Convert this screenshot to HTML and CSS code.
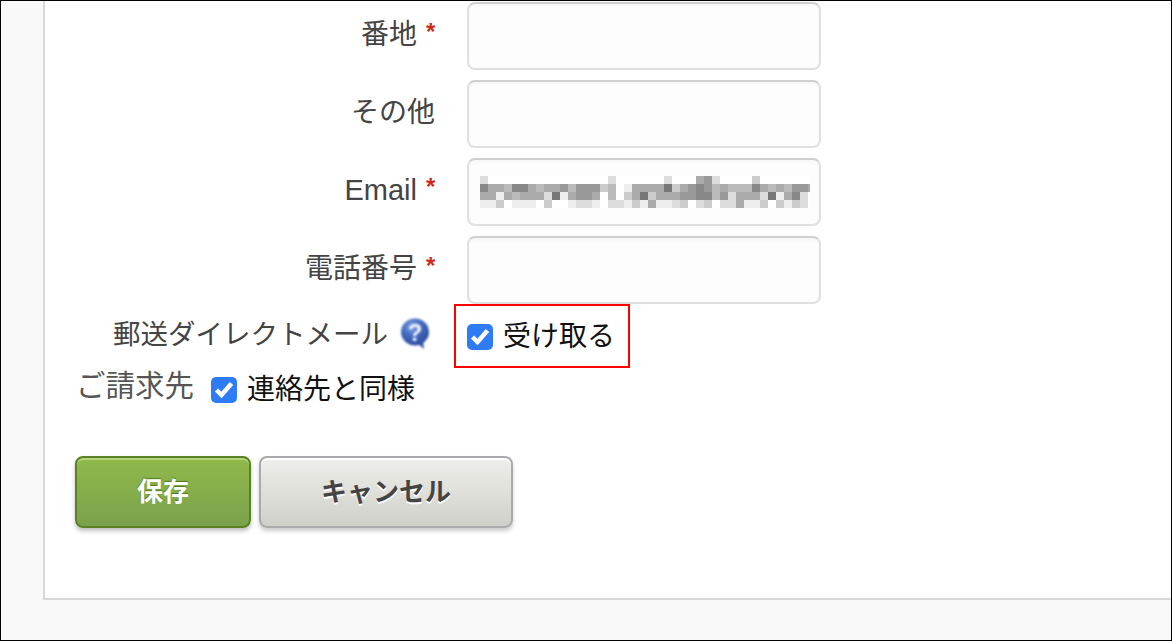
FILE: index.html
```html
<!DOCTYPE html>
<html lang="ja">
<head>
	<title>お客様情報</title>
	<meta charset="UTF-8">
	<link rel="stylesheet" href="styles.css">
</head>
<body>

<div class="card">

	<div class="fields">
		<div class="field">
			<label class="label">番地<span class="req">*</span></label>
			<input type="text" class="text-input">
		</div>
		<div class="field">
			<label class="label">その他<span class="req-space"></span></label>
			<input type="text" class="text-input">
		</div>
		<div class="field">
			<label class="label label-latin">Email<span class="req">*</span></label>
			<div class="blur-wrap">
				<input type="text" class="text-input">
				<div class="blur" id="blur"></div>
			</div>
		</div>
		<div class="field">
			<label class="label">電話番号<span class="req">*</span></label>
			<input type="text" class="text-input">
		</div>
	</div>

	<div class="mail-row">
		<label class="label label-mail">郵送ダイレクトメール
			<svg class="help" viewBox="0 0 30 32" width="30" height="32">
				<defs>
					<radialGradient id="bubble" cx="0.4" cy="0.3" r="0.75">
						<stop offset="0" stop-color="#7fa3e6"/>
						<stop offset="0.5" stop-color="#3f67bc"/>
						<stop offset="1" stop-color="#2a4a9c"/>
					</radialGradient>
				</defs>
				<ellipse cx="15" cy="14" rx="14" ry="13.5" fill="url(#bubble)"/>
				<path d="M17 25 L24 31 L23 23 Z" fill="#2f55aa"/>
				<text x="15" y="23" class="help-mark">?</text>
			</svg>
		</label>
		<div class="highlight">
			<span class="check">
				<svg viewBox="0 0 26 26" width="26" height="26"><path d="M5.5 13 L10.5 18 L20.5 6.5" fill="none" stroke="#fff" stroke-width="4.5"/></svg>
			</span>
			<span class="check-text">受け取る</span>
		</div>
	</div>

	<div class="billing-row">
		<span class="billing-label">ご請求先</span>
		<span class="check">
			<svg viewBox="0 0 26 26" width="26" height="26"><path d="M5.5 13 L10.5 18 L20.5 6.5" fill="none" stroke="#fff" stroke-width="4.5"/></svg>
		</span>
		<span class="check-text">連絡先と同様</span>
	</div>

	<div class="buttons">
		<button type="button" class="button save">保存</button>
		<button type="button" class="button cancel">キャンセル</button>
	</div>

</div>

<script src="blur.js"></script>
</body>
</html>
```

FILE: styles.css
```css
html, body {
	margin: 0;
	padding: 0;
}

body {
	box-sizing: border-box;
	width: 1172px;
	height: 641px;
	overflow: hidden;
	border: 1px solid #000;
	background-color: #f9f9f9;
	font-family: "Liberation Sans", "Noto Sans CJK JP", sans-serif;
}

.card {
	box-sizing: border-box;
	height: 599px;
	margin-left: 42px;
	padding-top: 1px;
	border-left: 2px solid #d8d8d8;
	border-bottom: 2px solid #d8d8d8;
	background-color: #fff;
}

.fields {
	display: grid;
	gap: 10px;
}

.field {
	display: flex;
	align-items: center;
	gap: 31px;
}

.label {
	display: flex;
	align-items: center;
	justify-content: flex-end;
	box-sizing: border-box;
	flex: none;
	width: 391px;
	height: 44px;
	margin-top: -2px;
	color: #444;
	font-size: 28px;
	line-height: 44px;
	white-space: nowrap;
}

.label-latin {
	margin-top: -4px;
	font-size: 29px;
}

.req {
	width: 10px;
	margin-left: 9px;
	margin-top: -6px;
	color: #cf2a1c;
	font-size: 24px;
	font-weight: bold;
}

.req-space {
	width: 1px;
}

.text-input {
	display: block;
	box-sizing: border-box;
	width: 354px;
	height: 68px;
	border: 2px solid #e0e0e0;
	border-top-color: #cfcfcf;
	border-radius: 8px;
	background-color: #fdfdfd;
	box-shadow: inset 0 2px 3px rgba(0, 0, 0, 0.03);
	outline: none;
}

.blur-wrap {
	position: relative;
}

.blur {
	position: absolute;
	left: 13px;
	top: 18px;
	width: 330px;
	height: 32px;
	overflow: hidden;
}

.blur-row {
	display: flex;
	height: 8px;
}

.blur-cell {
	flex: none;
	width: 8px;
	height: 8px;
}

.mail-row {
	display: flex;
	align-items: center;
}

.label-mail {
	margin-top: -3px;
	padding-right: 6px;
	font-size: 27.5px;
}

.help {
	flex: none;
	margin-left: 12px;
	margin-top: -1px;
	filter: blur(0.8px);
}

.help-mark {
	fill: #f4f6fb;
	font-size: 24px;
	font-weight: bold;
	font-family: "Liberation Sans", sans-serif;
	text-anchor: middle;
}

.highlight {
	display: flex;
	align-items: center;
	box-sizing: border-box;
	width: 176px;
	height: 64px;
	margin-left: 18px;
	padding: 1px 0 0 11px;
	border: 2px solid #f00;
}

.check {
	display: block;
	flex: none;
	width: 26px;
	height: 26px;
	border-radius: 5px;
	background-color: #2f7bf6;
}

.check svg {
	display: block;
}

.check-text {
	margin-left: 10px;
	color: #111;
	font-size: 28px;
	line-height: 40px;
	white-space: nowrap;
}

.billing-row {
	display: flex;
	align-items: center;
	height: 40px;
	margin-top: 2px;
	padding-left: 31px;
}

.billing-label {
	width: 135px;
	margin-top: -9px;
	color: #555;
	font-size: 29.5px;
	line-height: 40px;
	white-space: nowrap;
}

.buttons {
	display: flex;
	gap: 8px;
	margin-top: 46px;
	padding-left: 30px;
}

.button {
	box-sizing: border-box;
	height: 72px;
	padding: 0 0 6px;
	border-radius: 8px;
	font-family: inherit;
	font-size: 26px;
	font-weight: bold;
	cursor: pointer;
}

.save {
	width: 176px;
	border: 2px solid #5a8224;
	background: linear-gradient(#90b94a, #79a24d);
	box-shadow: inset 0 2px 0 #b7d57d, 0 3px 4px rgba(0, 0, 0, 0.25);
	color: #fff;
	text-shadow: 0 -1px 1px #4f7420;
}

.cancel {
	width: 254px;
	border: 2px solid #aaa;
	background: linear-gradient(#eeeeea, #d0d0cb);
	box-shadow: inset 0 2px 0 #fff, 0 3px 4px rgba(0, 0, 0, 0.2);
	color: #444;
	text-shadow: 0 2px 0 #fff;
}
```

FILE: blur.js
```js
// one hex digit per cell, grey level of the pixelated address
let rows = [
	"dfffffffffffffffdffffffdfffa9dffffcfffffff",
	"8aab88abaa9b999cbfeaaaa7ca989babbb8abab99a",
	"aaeabaaad7ea99afbfca7caaa9988b9daaad7ea8df",
	"eecfeeefcffeddefddeceaeedcfdcfddaeecfcecdf"
];

let blur = document.getElementById("blur");

for (let r = 0; r < rows.length; r++) {
	let row = document.createElement("div");
	row.className = "blur-row";

	for (let c = 0; c < rows[r].length; c++) {
		let level = rows[r][c];
		let cell = document.createElement("div");
		cell.className = "blur-cell";
		cell.style.backgroundColor = "#" + level + level + level;
		row.appendChild(cell);
	}

	blur.appendChild(row);
}
```
